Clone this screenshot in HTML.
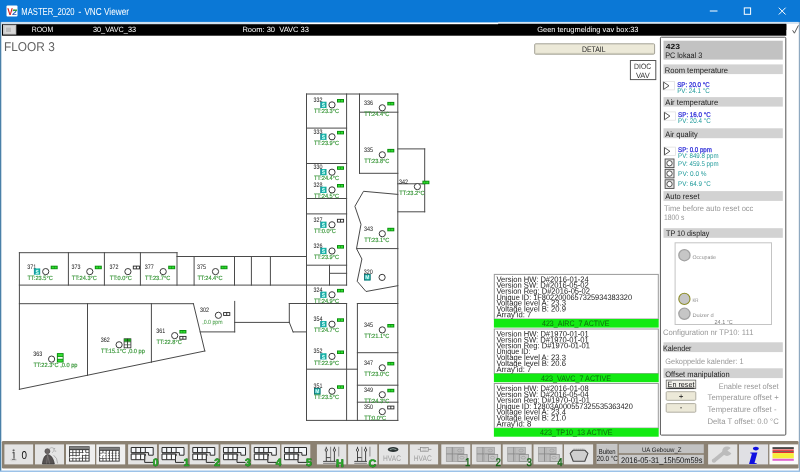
<!DOCTYPE html>
<html lang="nl">
<head>
<meta charset="utf-8">
<title>MASTER_2020 - VNC Viewer</title>
<style>
html,body{margin:0;padding:0;background:#fff;overflow:hidden}
svg{display:block;will-change:transform}
svg text{font-family:"Liberation Sans", sans-serif;white-space:pre;text-rendering:geometricPrecision}
</style>
</head>
<body>
<svg width="800" height="472" viewBox="0 0 800 472">
<rect x="0.00" y="0.00" width="800.00" height="472.00" fill="#fff"/>
<rect x="0.00" y="0.00" width="800.00" height="22.80" fill="#0b78d6"/>
<rect x="0.00" y="22.00" width="1.30" height="450.00" fill="#4a80a8"/>
<rect x="798.80" y="22.00" width="1.20" height="450.00" fill="#8fa9c0"/>
<rect x="0.00" y="470.50" width="800.00" height="1.50" fill="#9cc2e8"/>
<rect x="6.50" y="5.50" width="11.00" height="11.00" fill="#fff" rx="1"/>
<text x="7.2" y="14.6" font-size="10" fill="#d8201a" textLength="5.6" lengthAdjust="spacingAndGlyphs" font-weight="bold">V</text>
<text x="12.0" y="14.8" font-size="7.5" fill="#2a63c0" textLength="4.8" lengthAdjust="spacingAndGlyphs" font-weight="bold">2</text>
<rect x="13.00" y="9.50" width="4.00" height="1.50" fill="#38a038"/>
<text y="14.7" font-size="10.2" fill="#fff"><tspan x="21.3" textLength="53.2" lengthAdjust="spacingAndGlyphs">MASTER_2020</tspan><tspan x="75.6" textLength="8.6" lengthAdjust="spacingAndGlyphs"> - </tspan><tspan x="84.4" textLength="44.6" lengthAdjust="spacingAndGlyphs">VNC Viewer</tspan></text>
<line x1="709.80" y1="11.00" x2="717.50" y2="11.00" stroke="#fff" stroke-width="1"/>
<rect x="744.30" y="7.90" width="6.30" height="6.40" fill="none" stroke="#fff" stroke-width="1"/>
<line x1="778.80" y1="7.70" x2="785.60" y2="14.50" stroke="#fff" stroke-width="1"/>
<line x1="785.60" y1="7.70" x2="778.80" y2="14.50" stroke="#fff" stroke-width="1"/>
<rect x="301.00" y="22.50" width="197.10" height="1.90" fill="#fff"/>
<rect x="498.10" y="21.90" width="300.70" height="2.00" fill="#d4e4f2"/>
<rect x="1.20" y="21.90" width="299.80" height="2.30" fill="#cfe0ee"/>
<rect x="2.00" y="24.20" width="784.30" height="11.50" fill="#000"/>
<rect x="498.10" y="23.80" width="288.20" height="6.20" fill="#000"/>
<rect x="3.00" y="24.80" width="13.30" height="9.80" fill="#c4c4c4"/>
<rect x="4.50" y="26.00" width="10.50" height="7.50" fill="#d8d8d8"/>
<rect x="6.00" y="27.60" width="5.00" height="4.40" fill="#bdbdbd"/>
<text x="31.7" y="32.3" font-size="7.6" fill="#fff" textLength="21.5" lengthAdjust="spacingAndGlyphs">ROOM</text>
<text x="93.0" y="32.3" font-size="7.6" fill="#fff" textLength="43.0" lengthAdjust="spacingAndGlyphs">30_VAVC_33</text>
<text x="242.4" y="32.3" font-size="7.6" fill="#fff" textLength="66.6" lengthAdjust="spacingAndGlyphs">Room: 30  VAVC 33</text>
<text x="537.3" y="32.3" font-size="7.6" fill="#fff" textLength="101.2" lengthAdjust="spacingAndGlyphs">Geen terugmelding vav box:33</text>
<polyline points="792.60,30.30 794.40,33.20 798.40,25.40" fill="none" stroke="#555" stroke-width="1"/>
<text x="4.0" y="50.8" font-size="12.8" fill="#636363" textLength="50.8" lengthAdjust="spacingAndGlyphs">FLOOR 3</text>
<rect x="534.70" y="43.80" width="119.90" height="10.40" fill="#ece9d8" stroke="#a3a196" stroke-width="1" rx="1"/>
<line x1="535.50" y1="53.40" x2="654.00" y2="53.40" stroke="#c9c6b6" stroke-width="1"/>
<text x="582.0" y="52.1" font-size="8.0" fill="#222" textLength="23.6" lengthAdjust="spacingAndGlyphs">DETAIL</text>
<rect x="630.40" y="60.50" width="25.40" height="19.10" fill="#fff" stroke="#555" stroke-width="1"/>
<text x="634.1" y="68.9" font-size="7.8" fill="#333" textLength="17.1" lengthAdjust="spacingAndGlyphs">DIOC</text>
<text x="635.9" y="77.9" font-size="7.8" fill="#333" textLength="14.0" lengthAdjust="spacingAndGlyphs">VAV</text>
<g id="plan" fill="none" stroke-linecap="square">
<line x1="306.50" y1="94.00" x2="306.50" y2="420.40" stroke="#4a4a4a" stroke-width="1"/>
<line x1="346.60" y1="94.00" x2="346.60" y2="285.10" stroke="#4a4a4a" stroke-width="1"/>
<line x1="346.60" y1="303.50" x2="346.60" y2="420.40" stroke="#4a4a4a" stroke-width="1"/>
<line x1="359.50" y1="94.00" x2="359.50" y2="173.30" stroke="#4a4a4a" stroke-width="1"/>
<line x1="357.40" y1="303.50" x2="357.40" y2="420.40" stroke="#4a4a4a" stroke-width="1"/>
<line x1="397.80" y1="94.00" x2="397.80" y2="420.40" stroke="#4a4a4a" stroke-width="1"/>
<line x1="424.70" y1="148.90" x2="424.70" y2="211.80" stroke="#4a4a4a" stroke-width="1"/>
<line x1="306.50" y1="94.00" x2="397.80" y2="94.00" stroke="#4a4a4a" stroke-width="1"/>
<line x1="306.50" y1="128.10" x2="346.60" y2="128.10" stroke="#4a4a4a" stroke-width="1"/>
<line x1="359.50" y1="112.20" x2="397.80" y2="112.20" stroke="#4a4a4a" stroke-width="1"/>
<line x1="306.50" y1="163.50" x2="346.60" y2="163.50" stroke="#4a4a4a" stroke-width="1"/>
<line x1="359.50" y1="173.30" x2="397.80" y2="173.30" stroke="#4a4a4a" stroke-width="1"/>
<line x1="397.80" y1="148.90" x2="424.70" y2="148.90" stroke="#4a4a4a" stroke-width="1"/>
<line x1="397.80" y1="183.80" x2="424.70" y2="183.80" stroke="#4a4a4a" stroke-width="1"/>
<line x1="397.80" y1="211.80" x2="424.70" y2="211.80" stroke="#4a4a4a" stroke-width="1"/>
<line x1="306.50" y1="198.50" x2="346.60" y2="198.50" stroke="#4a4a4a" stroke-width="1"/>
<line x1="306.50" y1="213.90" x2="346.60" y2="213.90" stroke="#4a4a4a" stroke-width="1"/>
<line x1="306.50" y1="265.20" x2="346.60" y2="265.20" stroke="#4a4a4a" stroke-width="1"/>
<line x1="329.50" y1="265.20" x2="329.50" y2="285.10" stroke="#4a4a4a" stroke-width="1"/>
<line x1="329.50" y1="273.30" x2="346.60" y2="273.30" stroke="#4a4a4a" stroke-width="1"/>
<line x1="19.40" y1="285.10" x2="346.60" y2="285.10" stroke="#4a4a4a" stroke-width="1"/>
<line x1="289.30" y1="303.50" x2="346.60" y2="303.50" stroke="#4a4a4a" stroke-width="1"/>
<line x1="357.40" y1="303.50" x2="397.80" y2="303.50" stroke="#4a4a4a" stroke-width="1"/>
<line x1="306.50" y1="369.20" x2="357.40" y2="369.20" stroke="#4a4a4a" stroke-width="1"/>
<line x1="357.40" y1="352.70" x2="397.80" y2="352.70" stroke="#4a4a4a" stroke-width="1"/>
<line x1="357.40" y1="385.20" x2="397.80" y2="385.20" stroke="#4a4a4a" stroke-width="1"/>
<line x1="357.40" y1="402.20" x2="397.80" y2="402.20" stroke="#4a4a4a" stroke-width="1"/>
<line x1="306.50" y1="420.40" x2="397.80" y2="420.40" stroke="#4a4a4a" stroke-width="1"/>
<line x1="356.80" y1="248.60" x2="397.80" y2="248.60" stroke="#4a4a4a" stroke-width="1"/>
<line x1="19.40" y1="252.70" x2="19.40" y2="389.30" stroke="#4a4a4a" stroke-width="1"/>
<line x1="19.40" y1="252.70" x2="177.00" y2="252.70" stroke="#4a4a4a" stroke-width="1"/>
<line x1="177.00" y1="252.70" x2="177.00" y2="285.10" stroke="#4a4a4a" stroke-width="1"/>
<line x1="177.00" y1="256.50" x2="306.50" y2="256.50" stroke="#4a4a4a" stroke-width="1"/>
<line x1="68.40" y1="252.70" x2="68.40" y2="285.10" stroke="#4a4a4a" stroke-width="1"/>
<line x1="104.40" y1="252.70" x2="104.40" y2="285.10" stroke="#4a4a4a" stroke-width="1"/>
<line x1="140.40" y1="252.70" x2="140.40" y2="285.10" stroke="#4a4a4a" stroke-width="1"/>
<line x1="194.10" y1="256.50" x2="194.10" y2="285.10" stroke="#4a4a4a" stroke-width="1"/>
<line x1="234.50" y1="256.50" x2="234.50" y2="285.10" stroke="#4a4a4a" stroke-width="1"/>
<line x1="251.40" y1="256.50" x2="251.40" y2="285.10" stroke="#4a4a4a" stroke-width="1"/>
<line x1="270.40" y1="256.50" x2="270.40" y2="285.10" stroke="#4a4a4a" stroke-width="1"/>
<line x1="19.40" y1="303.70" x2="193.40" y2="303.70" stroke="#4a4a4a" stroke-width="1"/>
<line x1="87.50" y1="303.70" x2="87.50" y2="375.30" stroke="#4a4a4a" stroke-width="1"/>
<line x1="151.40" y1="303.70" x2="151.40" y2="362.30" stroke="#4a4a4a" stroke-width="1"/>
<line x1="19.40" y1="389.30" x2="204.80" y2="351.00" stroke="#4a4a4a" stroke-width="1"/>
<line x1="193.40" y1="303.70" x2="204.80" y2="351.00" stroke="#4a4a4a" stroke-width="1"/>
<line x1="200.20" y1="331.90" x2="234.70" y2="331.90" stroke="#4a4a4a" stroke-width="1"/>
<line x1="234.70" y1="301.40" x2="234.70" y2="331.90" stroke="#4a4a4a" stroke-width="1"/>
<line x1="234.70" y1="322.40" x2="289.30" y2="322.40" stroke="#4a4a4a" stroke-width="1"/>
<line x1="289.30" y1="303.50" x2="289.30" y2="322.40" stroke="#4a4a4a" stroke-width="1"/>
<line x1="289.30" y1="322.40" x2="293.10" y2="331.90" stroke="#4a4a4a" stroke-width="1"/>
<line x1="293.10" y1="331.90" x2="306.50" y2="331.90" stroke="#4a4a4a" stroke-width="1"/>
<polyline points="397.80,194.40 363.50,191.30 354.90,206.30 361.00,224.30 356.50,248.60 361.90,259.00 357.20,281.30 366.00,291.50 397.80,285.70" fill="none" stroke="#4a4a4a" stroke-width="1"/>
</g>
<defs><linearGradient id="teal" x1="0" y1="0" x2="1" y2="0"><stop offset="0" stop-color="#14909c"/><stop offset="0.55" stop-color="#22c8b4"/><stop offset="1" stop-color="#139a94"/></linearGradient></defs>
<text x="313.6" y="101.8" font-size="6.5" fill="#161616" textLength="9.0" lengthAdjust="spacingAndGlyphs">332</text>
<rect x="320.20" y="101.70" width="6.3" height="6.3" fill="url(#teal)"/>
<text x="321.7" y="107.0" font-size="5.6" fill="#e8ffff" textLength="3.3" lengthAdjust="spacingAndGlyphs" font-weight="bold">S</text>
<circle cx="332.00" cy="104.90" r="3.1" fill="#fff" stroke="#3a3a3a" stroke-width="1"/>
<rect x="337.00" y="99.00" width="7.00" height="3.50" fill="#0c8a10"/>
<rect x="338.00" y="99.90" width="2.20" height="1.80" fill="#2fe02f"/>
<rect x="340.80" y="99.90" width="2.20" height="1.80" fill="#2fe02f"/>
<text x="313.9" y="113.0" font-size="6.1" fill="#349434" textLength="25.2" lengthAdjust="spacingAndGlyphs" stroke="#349434" stroke-width="0.15">TT:23.3°C</text>
<text x="313.6" y="133.7" font-size="6.5" fill="#161616" textLength="9.0" lengthAdjust="spacingAndGlyphs">333</text>
<rect x="320.20" y="133.60" width="6.3" height="6.3" fill="url(#teal)"/>
<text x="321.7" y="138.9" font-size="5.6" fill="#e8ffff" textLength="3.3" lengthAdjust="spacingAndGlyphs" font-weight="bold">S</text>
<circle cx="332.00" cy="136.80" r="3.1" fill="#fff" stroke="#3a3a3a" stroke-width="1"/>
<rect x="337.00" y="130.90" width="7.00" height="3.50" fill="#0c8a10"/>
<rect x="338.00" y="131.80" width="2.20" height="1.80" fill="#2fe02f"/>
<rect x="340.80" y="131.80" width="2.20" height="1.80" fill="#2fe02f"/>
<text x="313.9" y="144.9" font-size="6.1" fill="#349434" textLength="25.2" lengthAdjust="spacingAndGlyphs" stroke="#349434" stroke-width="0.15">TT:23.9°C</text>
<text x="313.6" y="169.1" font-size="6.5" fill="#161616" textLength="9.0" lengthAdjust="spacingAndGlyphs">330</text>
<rect x="320.20" y="169.00" width="6.3" height="6.3" fill="url(#teal)"/>
<text x="321.7" y="174.3" font-size="5.6" fill="#e8ffff" textLength="3.3" lengthAdjust="spacingAndGlyphs" font-weight="bold">S</text>
<circle cx="332.00" cy="172.20" r="3.1" fill="#fff" stroke="#3a3a3a" stroke-width="1"/>
<rect x="337.00" y="166.30" width="7.00" height="3.50" fill="#0c8a10"/>
<rect x="338.00" y="167.20" width="2.20" height="1.80" fill="#2fe02f"/>
<rect x="340.80" y="167.20" width="2.20" height="1.80" fill="#2fe02f"/>
<text x="313.9" y="180.3" font-size="6.1" fill="#349434" textLength="25.2" lengthAdjust="spacingAndGlyphs" stroke="#349434" stroke-width="0.15">TT:24.4°C</text>
<text x="313.6" y="186.8" font-size="6.5" fill="#161616" textLength="9.0" lengthAdjust="spacingAndGlyphs">328</text>
<rect x="320.20" y="186.70" width="6.3" height="6.3" fill="url(#teal)"/>
<text x="321.7" y="192.0" font-size="5.6" fill="#e8ffff" textLength="3.3" lengthAdjust="spacingAndGlyphs" font-weight="bold">S</text>
<circle cx="332.00" cy="189.90" r="3.1" fill="#fff" stroke="#3a3a3a" stroke-width="1"/>
<rect x="337.00" y="184.00" width="7.00" height="3.50" fill="#0c8a10"/>
<rect x="338.00" y="184.90" width="2.20" height="1.80" fill="#2fe02f"/>
<rect x="340.80" y="184.90" width="2.20" height="1.80" fill="#2fe02f"/>
<text x="313.9" y="198.0" font-size="6.1" fill="#349434" textLength="25.2" lengthAdjust="spacingAndGlyphs" stroke="#349434" stroke-width="0.15">TT:24.5°C</text>
<text x="313.6" y="221.7" font-size="6.5" fill="#161616" textLength="9.0" lengthAdjust="spacingAndGlyphs">327</text>
<rect x="320.20" y="221.60" width="6.3" height="6.3" fill="url(#teal)"/>
<text x="321.7" y="226.9" font-size="5.6" fill="#e8ffff" textLength="3.3" lengthAdjust="spacingAndGlyphs" font-weight="bold">S</text>
<circle cx="332.00" cy="224.80" r="3.1" fill="#fff" stroke="#3a3a3a" stroke-width="1"/>
<rect x="337.40" y="219.30" width="6.20" height="2.80" fill="#fff" stroke="#262626" stroke-width="0.9"/>
<line x1="340.50" y1="219.30" x2="340.50" y2="222.10" stroke="#262626" stroke-width="0.9"/>
<text x="313.9" y="232.9" font-size="6.1" fill="#349434" textLength="22.0" lengthAdjust="spacingAndGlyphs" stroke="#349434" stroke-width="0.15">TT:0.0°C</text>
<text x="313.6" y="247.9" font-size="6.5" fill="#161616" textLength="9.0" lengthAdjust="spacingAndGlyphs">326</text>
<rect x="320.20" y="247.80" width="6.3" height="6.3" fill="url(#teal)"/>
<text x="321.7" y="253.1" font-size="5.6" fill="#e8ffff" textLength="3.3" lengthAdjust="spacingAndGlyphs" font-weight="bold">S</text>
<circle cx="332.00" cy="251.00" r="3.1" fill="#fff" stroke="#3a3a3a" stroke-width="1"/>
<rect x="337.00" y="245.10" width="7.00" height="3.50" fill="#0c8a10"/>
<rect x="338.00" y="246.00" width="2.20" height="1.80" fill="#2fe02f"/>
<rect x="340.80" y="246.00" width="2.20" height="1.80" fill="#2fe02f"/>
<text x="313.9" y="259.1" font-size="6.1" fill="#349434" textLength="25.2" lengthAdjust="spacingAndGlyphs" stroke="#349434" stroke-width="0.15">TT:23.9°C</text>
<text x="313.6" y="291.7" font-size="6.5" fill="#161616" textLength="9.0" lengthAdjust="spacingAndGlyphs">324</text>
<rect x="320.20" y="291.60" width="6.3" height="6.3" fill="url(#teal)"/>
<text x="321.7" y="296.9" font-size="5.6" fill="#e8ffff" textLength="3.3" lengthAdjust="spacingAndGlyphs" font-weight="bold">S</text>
<circle cx="332.00" cy="294.80" r="3.1" fill="#fff" stroke="#3a3a3a" stroke-width="1"/>
<rect x="337.00" y="288.90" width="7.00" height="3.50" fill="#0c8a10"/>
<rect x="338.00" y="289.80" width="2.20" height="1.80" fill="#2fe02f"/>
<rect x="340.80" y="289.80" width="2.20" height="1.80" fill="#2fe02f"/>
<text x="313.9" y="302.9" font-size="6.1" fill="#349434" textLength="25.2" lengthAdjust="spacingAndGlyphs" stroke="#349434" stroke-width="0.15">TT:24.9°C</text>
<text x="313.6" y="321.1" font-size="6.5" fill="#161616" textLength="9.0" lengthAdjust="spacingAndGlyphs">354</text>
<rect x="320.20" y="321.00" width="6.3" height="6.3" fill="url(#teal)"/>
<text x="321.7" y="326.3" font-size="5.6" fill="#e8ffff" textLength="3.3" lengthAdjust="spacingAndGlyphs" font-weight="bold">S</text>
<circle cx="332.00" cy="324.20" r="3.1" fill="#fff" stroke="#3a3a3a" stroke-width="1"/>
<rect x="337.00" y="318.30" width="7.00" height="3.50" fill="#0c8a10"/>
<rect x="338.00" y="319.20" width="2.20" height="1.80" fill="#2fe02f"/>
<rect x="340.80" y="319.20" width="2.20" height="1.80" fill="#2fe02f"/>
<text x="313.9" y="332.3" font-size="6.1" fill="#349434" textLength="25.2" lengthAdjust="spacingAndGlyphs" stroke="#349434" stroke-width="0.15">TT:24.7°C</text>
<text x="313.6" y="353.3" font-size="6.5" fill="#161616" textLength="9.0" lengthAdjust="spacingAndGlyphs">352</text>
<rect x="320.20" y="353.20" width="6.3" height="6.3" fill="url(#teal)"/>
<text x="321.7" y="358.5" font-size="5.6" fill="#e8ffff" textLength="3.3" lengthAdjust="spacingAndGlyphs" font-weight="bold">S</text>
<circle cx="332.00" cy="356.40" r="3.1" fill="#fff" stroke="#3a3a3a" stroke-width="1"/>
<rect x="337.00" y="350.50" width="7.00" height="3.50" fill="#0c8a10"/>
<rect x="338.00" y="351.40" width="2.20" height="1.80" fill="#2fe02f"/>
<rect x="340.80" y="351.40" width="2.20" height="1.80" fill="#2fe02f"/>
<text x="313.9" y="364.5" font-size="6.1" fill="#349434" textLength="25.2" lengthAdjust="spacingAndGlyphs" stroke="#349434" stroke-width="0.15">TT:22.9°C</text>
<text x="313.6" y="388.1" font-size="6.5" fill="#161616" textLength="9.0" lengthAdjust="spacingAndGlyphs">351</text>
<rect x="314.10" y="388.10" width="6.3" height="6.3" fill="url(#teal)"/>
<rect x="314.45" y="388.45" width="5.6" height="5.6" fill="none" stroke="#0d6a6a" stroke-width="0.7"/>
<text x="315.2" y="393.4" font-size="5.6" fill="#e8ffff" textLength="4.2" lengthAdjust="spacingAndGlyphs" font-weight="bold">M</text>
<circle cx="332.00" cy="391.20" r="3.1" fill="#fff" stroke="#3a3a3a" stroke-width="1"/>
<rect x="337.00" y="385.30" width="7.00" height="3.50" fill="#0c8a10"/>
<rect x="338.00" y="386.20" width="2.20" height="1.80" fill="#2fe02f"/>
<rect x="340.80" y="386.20" width="2.20" height="1.80" fill="#2fe02f"/>
<text x="313.9" y="399.3" font-size="6.1" fill="#349434" textLength="25.2" lengthAdjust="spacingAndGlyphs" stroke="#349434" stroke-width="0.15">TT:23.5°C</text>
<text x="363.9" y="104.7" font-size="6.5" fill="#161616" textLength="9.0" lengthAdjust="spacingAndGlyphs">336</text>
<circle cx="382.30" cy="107.80" r="3.1" fill="#fff" stroke="#3a3a3a" stroke-width="1"/>
<rect x="387.30" y="101.90" width="7.00" height="3.50" fill="#0c8a10"/>
<rect x="388.30" y="102.80" width="2.20" height="1.80" fill="#2fe02f"/>
<rect x="391.10" y="102.80" width="2.20" height="1.80" fill="#2fe02f"/>
<text x="364.2" y="115.9" font-size="6.1" fill="#349434" textLength="25.2" lengthAdjust="spacingAndGlyphs" stroke="#349434" stroke-width="0.15">TT:24.4°C</text>
<text x="363.9" y="151.7" font-size="6.5" fill="#161616" textLength="9.0" lengthAdjust="spacingAndGlyphs">335</text>
<circle cx="382.30" cy="154.80" r="3.1" fill="#fff" stroke="#3a3a3a" stroke-width="1"/>
<rect x="387.30" y="148.90" width="7.00" height="3.50" fill="#0c8a10"/>
<rect x="388.30" y="149.80" width="2.20" height="1.80" fill="#2fe02f"/>
<rect x="391.10" y="149.80" width="2.20" height="1.80" fill="#2fe02f"/>
<text x="364.2" y="162.9" font-size="6.1" fill="#349434" textLength="25.2" lengthAdjust="spacingAndGlyphs" stroke="#349434" stroke-width="0.15">TT:23.8°C</text>
<text x="363.9" y="230.6" font-size="6.5" fill="#161616" textLength="9.0" lengthAdjust="spacingAndGlyphs">343</text>
<circle cx="382.30" cy="233.70" r="3.1" fill="#fff" stroke="#3a3a3a" stroke-width="1"/>
<rect x="387.30" y="227.80" width="7.00" height="3.50" fill="#0c8a10"/>
<rect x="388.30" y="228.70" width="2.20" height="1.80" fill="#2fe02f"/>
<rect x="391.10" y="228.70" width="2.20" height="1.80" fill="#2fe02f"/>
<text x="364.2" y="241.8" font-size="6.1" fill="#349434" textLength="25.2" lengthAdjust="spacingAndGlyphs" stroke="#349434" stroke-width="0.15">TT:23.1°C</text>
<text x="363.7" y="274.3" font-size="6.5" fill="#161616" textLength="9.0" lengthAdjust="spacingAndGlyphs">320</text>
<rect x="364.20" y="274.10" width="6.3" height="6.3" fill="url(#teal)"/>
<rect x="364.55" y="274.45" width="5.6" height="5.6" fill="none" stroke="#0d6a6a" stroke-width="0.7"/>
<text x="365.3" y="279.4" font-size="5.6" fill="#e8ffff" textLength="4.2" lengthAdjust="spacingAndGlyphs" font-weight="bold">M</text>
<circle cx="382.10" cy="277.40" r="3.1" fill="#fff" stroke="#3a3a3a" stroke-width="1"/>
<text x="363.9" y="326.8" font-size="6.5" fill="#161616" textLength="9.0" lengthAdjust="spacingAndGlyphs">345</text>
<circle cx="382.30" cy="329.90" r="3.1" fill="#fff" stroke="#3a3a3a" stroke-width="1"/>
<rect x="387.30" y="324.00" width="7.00" height="3.50" fill="#0c8a10"/>
<rect x="388.30" y="324.90" width="2.20" height="1.80" fill="#2fe02f"/>
<rect x="391.10" y="324.90" width="2.20" height="1.80" fill="#2fe02f"/>
<text x="364.2" y="338.0" font-size="6.1" fill="#349434" textLength="25.2" lengthAdjust="spacingAndGlyphs" stroke="#349434" stroke-width="0.15">TT:21.1°C</text>
<text x="363.9" y="364.7" font-size="6.5" fill="#161616" textLength="9.0" lengthAdjust="spacingAndGlyphs">347</text>
<circle cx="382.30" cy="367.80" r="3.1" fill="#fff" stroke="#3a3a3a" stroke-width="1"/>
<rect x="387.30" y="361.90" width="7.00" height="3.50" fill="#0c8a10"/>
<rect x="388.30" y="362.80" width="2.20" height="1.80" fill="#2fe02f"/>
<rect x="391.10" y="362.80" width="2.20" height="1.80" fill="#2fe02f"/>
<text x="364.2" y="375.9" font-size="6.1" fill="#349434" textLength="25.2" lengthAdjust="spacingAndGlyphs" stroke="#349434" stroke-width="0.15">TT:23.0°C</text>
<text x="363.9" y="391.6" font-size="6.5" fill="#161616" textLength="9.0" lengthAdjust="spacingAndGlyphs">349</text>
<circle cx="382.30" cy="394.70" r="3.1" fill="#fff" stroke="#3a3a3a" stroke-width="1"/>
<rect x="387.30" y="388.80" width="7.00" height="3.50" fill="#0c8a10"/>
<rect x="388.30" y="389.70" width="2.20" height="1.80" fill="#2fe02f"/>
<rect x="391.10" y="389.70" width="2.20" height="1.80" fill="#2fe02f"/>
<text x="364.2" y="402.8" font-size="6.1" fill="#349434" textLength="25.2" lengthAdjust="spacingAndGlyphs" stroke="#349434" stroke-width="0.15">TT:24.3°C</text>
<text x="363.9" y="408.5" font-size="6.5" fill="#161616" textLength="9.0" lengthAdjust="spacingAndGlyphs">350</text>
<circle cx="382.30" cy="411.60" r="3.1" fill="#fff" stroke="#3a3a3a" stroke-width="1"/>
<rect x="387.70" y="406.10" width="6.20" height="2.80" fill="#fff" stroke="#262626" stroke-width="0.9"/>
<line x1="390.80" y1="406.10" x2="390.80" y2="408.90" stroke="#262626" stroke-width="0.9"/>
<text x="364.2" y="419.7" font-size="6.1" fill="#349434" textLength="22.0" lengthAdjust="spacingAndGlyphs" stroke="#349434" stroke-width="0.15">TT:0.0°C</text>
<text x="399.0" y="183.5" font-size="6.5" fill="#161616" textLength="9.0" lengthAdjust="spacingAndGlyphs">342</text>
<circle cx="417.40" cy="186.60" r="3.1" fill="#fff" stroke="#3a3a3a" stroke-width="1"/>
<rect x="422.40" y="180.70" width="7.00" height="3.50" fill="#0c8a10"/>
<rect x="423.40" y="181.60" width="2.20" height="1.80" fill="#2fe02f"/>
<rect x="426.20" y="181.60" width="2.20" height="1.80" fill="#2fe02f"/>
<text x="399.3" y="194.7" font-size="6.1" fill="#349434" textLength="25.2" lengthAdjust="spacingAndGlyphs" stroke="#349434" stroke-width="0.15">TT:23.2°C</text>
<text x="27.3" y="268.5" font-size="6.5" fill="#161616" textLength="9.0" lengthAdjust="spacingAndGlyphs">371</text>
<rect x="33.90" y="268.40" width="6.3" height="6.3" fill="url(#teal)"/>
<text x="35.4" y="273.7" font-size="5.6" fill="#e8ffff" textLength="3.3" lengthAdjust="spacingAndGlyphs" font-weight="bold">S</text>
<circle cx="45.70" cy="271.60" r="3.1" fill="#fff" stroke="#3a3a3a" stroke-width="1"/>
<rect x="50.70" y="265.70" width="7.00" height="3.50" fill="#0c8a10"/>
<rect x="51.70" y="266.60" width="2.20" height="1.80" fill="#2fe02f"/>
<rect x="54.50" y="266.60" width="2.20" height="1.80" fill="#2fe02f"/>
<text x="27.6" y="279.7" font-size="6.1" fill="#349434" textLength="25.2" lengthAdjust="spacingAndGlyphs" stroke="#349434" stroke-width="0.15">TT:23.5°C</text>
<text x="71.4" y="268.5" font-size="6.5" fill="#161616" textLength="9.0" lengthAdjust="spacingAndGlyphs">373</text>
<circle cx="89.80" cy="271.60" r="3.1" fill="#fff" stroke="#3a3a3a" stroke-width="1"/>
<rect x="94.80" y="265.70" width="7.00" height="3.50" fill="#0c8a10"/>
<rect x="95.80" y="266.60" width="2.20" height="1.80" fill="#2fe02f"/>
<rect x="98.60" y="266.60" width="2.20" height="1.80" fill="#2fe02f"/>
<text x="71.7" y="279.7" font-size="6.1" fill="#349434" textLength="25.2" lengthAdjust="spacingAndGlyphs" stroke="#349434" stroke-width="0.15">TT:24.3°C</text>
<text x="109.5" y="268.5" font-size="6.5" fill="#161616" textLength="9.0" lengthAdjust="spacingAndGlyphs">372</text>
<circle cx="127.90" cy="271.60" r="3.1" fill="#fff" stroke="#3a3a3a" stroke-width="1"/>
<rect x="133.30" y="266.10" width="6.20" height="2.80" fill="#fff" stroke="#262626" stroke-width="0.9"/>
<line x1="136.40" y1="266.10" x2="136.40" y2="268.90" stroke="#262626" stroke-width="0.9"/>
<text x="109.8" y="279.7" font-size="6.1" fill="#349434" textLength="22.0" lengthAdjust="spacingAndGlyphs" stroke="#349434" stroke-width="0.15">TT:0.0°C</text>
<text x="144.8" y="268.5" font-size="6.5" fill="#161616" textLength="9.0" lengthAdjust="spacingAndGlyphs">377</text>
<circle cx="163.20" cy="271.60" r="3.1" fill="#fff" stroke="#3a3a3a" stroke-width="1"/>
<rect x="168.20" y="265.70" width="7.00" height="3.50" fill="#0c8a10"/>
<rect x="169.20" y="266.60" width="2.20" height="1.80" fill="#2fe02f"/>
<rect x="172.00" y="266.60" width="2.20" height="1.80" fill="#2fe02f"/>
<text x="145.1" y="279.7" font-size="6.1" fill="#349434" textLength="25.2" lengthAdjust="spacingAndGlyphs" stroke="#349434" stroke-width="0.15">TT:23.7°C</text>
<text x="197.1" y="268.5" font-size="6.5" fill="#161616" textLength="9.0" lengthAdjust="spacingAndGlyphs">375</text>
<circle cx="215.50" cy="271.60" r="3.1" fill="#fff" stroke="#3a3a3a" stroke-width="1"/>
<rect x="220.50" y="265.70" width="7.00" height="3.50" fill="#0c8a10"/>
<rect x="221.50" y="266.60" width="2.20" height="1.80" fill="#2fe02f"/>
<rect x="224.30" y="266.60" width="2.20" height="1.80" fill="#2fe02f"/>
<text x="197.4" y="279.7" font-size="6.1" fill="#349434" textLength="25.2" lengthAdjust="spacingAndGlyphs" stroke="#349434" stroke-width="0.15">TT:24.4°C</text>
<text x="33.2" y="356.0" font-size="6.5" fill="#161616" textLength="9.0" lengthAdjust="spacingAndGlyphs">363</text>
<circle cx="51.60" cy="359.10" r="3.1" fill="#fff" stroke="#3a3a3a" stroke-width="1"/>
<text x="33.5" y="367.2" font-size="6.1" fill="#349434" textLength="44.0" lengthAdjust="spacingAndGlyphs" stroke="#349434" stroke-width="0.15">TT:22.3°C ,0.0 pp</text>
<rect x="56.90" y="353.10" width="6.70" height="9.40" fill="#0c8a10"/>
<rect x="57.80" y="353.90" width="4.90" height="2.10" fill="#2fe02f"/>
<rect x="57.80" y="356.90" width="4.90" height="1.90" fill="#f4fff0"/>
<rect x="57.80" y="359.60" width="4.90" height="2.10" fill="#2fe02f"/>
<text x="100.7" y="341.7" font-size="6.5" fill="#161616" textLength="9.0" lengthAdjust="spacingAndGlyphs">362</text>
<circle cx="119.10" cy="344.80" r="3.1" fill="#fff" stroke="#3a3a3a" stroke-width="1"/>
<text x="101.0" y="352.9" font-size="6.1" fill="#349434" textLength="43.8" lengthAdjust="spacingAndGlyphs" stroke="#349434" stroke-width="0.15">TT:15.1°C ,0.0 pp</text>
<rect x="124.10" y="338.80" width="6.80" height="9.00" fill="#fff" stroke="#2a2a2a" stroke-width="0.8"/>
<rect x="124.10" y="338.80" width="6.80" height="2.80" fill="#18a018"/>
<line x1="127.50" y1="338.80" x2="127.50" y2="347.80" stroke="#1c3a1c" stroke-width="0.8"/>
<line x1="124.10" y1="341.80" x2="130.90" y2="341.80" stroke="#2a5a2a" stroke-width="0.7"/>
<line x1="124.10" y1="344.80" x2="130.90" y2="344.80" stroke="#444" stroke-width="0.7"/>
<text x="156.3" y="332.5" font-size="6.5" fill="#161616" textLength="9.0" lengthAdjust="spacingAndGlyphs">361</text>
<circle cx="174.70" cy="335.60" r="3.1" fill="#fff" stroke="#3a3a3a" stroke-width="1"/>
<rect x="179.40" y="330.00" width="7.00" height="3.50" fill="#0c8a10"/>
<rect x="180.40" y="330.90" width="2.20" height="1.80" fill="#2fe02f"/>
<rect x="183.20" y="330.90" width="2.20" height="1.80" fill="#2fe02f"/>
<text x="156.6" y="343.7" font-size="6.1" fill="#349434" textLength="25.2" lengthAdjust="spacingAndGlyphs" stroke="#349434" stroke-width="0.15">TT:22.8°C</text>
<rect x="179.80" y="336.40" width="6.20" height="2.80" fill="#fff" stroke="#262626" stroke-width="0.9"/>
<line x1="182.90" y1="336.40" x2="182.90" y2="339.20" stroke="#262626" stroke-width="0.9"/>
<text x="200.0" y="312.2" font-size="6.5" fill="#161616" textLength="9.0" lengthAdjust="spacingAndGlyphs">302</text>
<circle cx="218.40" cy="315.30" r="3.1" fill="#fff" stroke="#3a3a3a" stroke-width="1"/>
<rect x="223.60" y="312.60" width="6.20" height="2.80" fill="#fff" stroke="#262626" stroke-width="0.9"/>
<line x1="226.70" y1="312.60" x2="226.70" y2="315.40" stroke="#262626" stroke-width="0.9"/>
<text x="202.3" y="323.7" font-size="6.1" fill="#349434" textLength="20.3" lengthAdjust="spacingAndGlyphs">,0.0 ppm</text>
<rect x="660.40" y="37.20" width="125.40" height="397.90" fill="#fff" stroke="#555" stroke-width="1" rx="1"/>
<rect x="663.50" y="40.70" width="119.30" height="18.90" fill="#c2c2c2"/>
<text x="665.7" y="49.3" font-size="7.4" fill="#111" textLength="14.2" lengthAdjust="spacingAndGlyphs" font-weight="bold">423</text>
<text x="665.2" y="58.0" font-size="8" fill="#1a1a1a" textLength="37.0" lengthAdjust="spacingAndGlyphs">PC lokaal 3</text>
<rect x="663.50" y="64.40" width="119.30" height="9.70" fill="#d2d2d2"/>
<text x="664.8" y="72.5" font-size="8" fill="#1a1a1a" textLength="63.2" lengthAdjust="spacingAndGlyphs">Room temperature</text>
<rect x="663.00" y="81.60" width="11.60" height="8.30" fill="#fff" stroke="#dcdcdc" stroke-width="0.7"/>
<polygon points="663.60,82.10 663.60,89.40 669.00,85.75" fill="#fff" stroke="#444" stroke-width="0.9"/>
<text x="677.2" y="87.2" font-size="6.9" fill="#2a2ad8" textLength="32.6" lengthAdjust="spacingAndGlyphs" stroke="#2a2ad8" stroke-width="0.25">SP: 20.0 °C</text>
<text x="677.2" y="92.9" font-size="6.9" fill="#1f9a9a" textLength="32.6" lengthAdjust="spacingAndGlyphs">PV: 24.1 °C</text>
<rect x="663.50" y="97.10" width="119.30" height="9.50" fill="#d2d2d2"/>
<text x="665.3" y="105.0" font-size="8" fill="#1a1a1a" textLength="52.9" lengthAdjust="spacingAndGlyphs">Air temperature</text>
<rect x="663.90" y="111.90" width="11.60" height="8.30" fill="#fff" stroke="#dcdcdc" stroke-width="0.7"/>
<polygon points="664.50,112.40 664.50,119.70 669.90,116.05" fill="#fff" stroke="#444" stroke-width="0.9"/>
<text x="678.1" y="116.8" font-size="6.9" fill="#2a2ad8" textLength="32.6" lengthAdjust="spacingAndGlyphs" stroke="#2a2ad8" stroke-width="0.25">SP: 16.0 °C</text>
<text x="678.1" y="123.0" font-size="6.9" fill="#1f9a9a" textLength="32.6" lengthAdjust="spacingAndGlyphs">PV: 20.4 °C</text>
<rect x="663.50" y="128.30" width="119.30" height="9.90" fill="#d2d2d2"/>
<text x="665.3" y="136.6" font-size="8" fill="#1a1a1a" textLength="32.4" lengthAdjust="spacingAndGlyphs">Air quality</text>
<rect x="663.90" y="147.10" width="11.60" height="8.30" fill="#fff" stroke="#dcdcdc" stroke-width="0.7"/>
<polygon points="664.50,147.60 664.50,154.90 669.90,151.25" fill="#fff" stroke="#444" stroke-width="0.9"/>
<text x="678.1" y="152.1" font-size="6.9" fill="#2a2ad8" textLength="33.8" lengthAdjust="spacingAndGlyphs" stroke="#2a2ad8" stroke-width="0.25">SP: 0.0 ppm</text>
<text x="678.1" y="157.8" font-size="6.9" fill="#1f9a9a" textLength="40.4" lengthAdjust="spacingAndGlyphs">PV: 849.8 ppm</text>
<rect x="665.10" y="159.00" width="8.90" height="8.60" fill="#e4e4e4" stroke="#4a4a4a" stroke-width="0.9"/>
<circle cx="669.50" cy="163.25" r="2.7" fill="#fff" stroke="#444" stroke-width="0.9"/>
<text x="678.1" y="165.8" font-size="6.9" fill="#1f9a9a" textLength="40.4" lengthAdjust="spacingAndGlyphs">PV: 459.5 ppm</text>
<rect x="665.10" y="169.30" width="8.90" height="8.60" fill="#e4e4e4" stroke="#4a4a4a" stroke-width="0.9"/>
<circle cx="669.50" cy="173.55" r="2.7" fill="#fff" stroke="#444" stroke-width="0.9"/>
<text x="678.1" y="176.0" font-size="6.9" fill="#1f9a9a" textLength="28.5" lengthAdjust="spacingAndGlyphs">PV: 0.0 %</text>
<rect x="665.10" y="179.80" width="8.90" height="8.60" fill="#e4e4e4" stroke="#4a4a4a" stroke-width="0.9"/>
<circle cx="669.50" cy="184.05" r="2.7" fill="#fff" stroke="#444" stroke-width="0.9"/>
<text x="678.1" y="186.4" font-size="6.9" fill="#1f9a9a" textLength="32.6" lengthAdjust="spacingAndGlyphs">PV: 64.9 °C</text>
<rect x="663.50" y="191.10" width="119.30" height="9.80" fill="#d2d2d2"/>
<text x="665.3" y="199.3" font-size="8" fill="#1a1a1a" textLength="34.2" lengthAdjust="spacingAndGlyphs">Auto reset</text>
<text x="663.9" y="211.1" font-size="8" fill="#979797" textLength="89.5" lengthAdjust="spacingAndGlyphs">Time before auto reset occ</text>
<text x="663.9" y="220.1" font-size="8" fill="#979797" textLength="20.5" lengthAdjust="spacingAndGlyphs">1800 s</text>
<rect x="663.50" y="228.20" width="119.30" height="9.60" fill="#d2d2d2"/>
<text x="666.0" y="236.2" font-size="8" fill="#1a1a1a" textLength="43.3" lengthAdjust="spacingAndGlyphs">TP 10 display</text>
<rect x="675.10" y="242.80" width="96.40" height="81.70" fill="#fff" stroke="#c4c4c4" stroke-width="1"/>
<circle cx="684.40" cy="255.20" r="5.6" fill="#c6c6c6" stroke="#a2a2a2" stroke-width="1.3"/>
<text x="692.4" y="258.8" font-size="5.2" fill="#8c8c8c" textLength="23.6" lengthAdjust="spacingAndGlyphs">Occupatie</text>
<circle cx="684.40" cy="298.90" r="5.6" fill="#c6c6c6" stroke="#8c8c28" stroke-width="1.1"/>
<text x="692.4" y="302.4" font-size="5.2" fill="#8c8c8c" textLength="6.2" lengthAdjust="spacingAndGlyphs">KR</text>
<circle cx="684.40" cy="313.80" r="5.6" fill="#c6c6c6" stroke="#a2a2a2" stroke-width="1.3"/>
<text x="692.4" y="316.8" font-size="5.2" fill="#8c8c8c" textLength="21.3" lengthAdjust="spacingAndGlyphs">Duizer d</text>
<text x="714.6" y="323.8" font-size="5.8" fill="#7a7a7a" textLength="18.2" lengthAdjust="spacingAndGlyphs">24.1 °C</text>
<text x="663.0" y="335.2" font-size="8" fill="#979797" textLength="90.4" lengthAdjust="spacingAndGlyphs">Configuration nr TP10: 111</text>
<rect x="663.50" y="342.30" width="119.30" height="9.80" fill="#d2d2d2"/>
<text x="663.0" y="350.5" font-size="8" fill="#1a1a1a" textLength="28.5" lengthAdjust="spacingAndGlyphs">Kalender</text>
<text x="665.3" y="363.6" font-size="8" fill="#979797" textLength="78.3" lengthAdjust="spacingAndGlyphs">Gekoppelde kalender: 1</text>
<rect x="663.50" y="368.30" width="119.30" height="9.80" fill="#d2d2d2"/>
<text x="665.3" y="376.5" font-size="8" fill="#1a1a1a" textLength="64.4" lengthAdjust="spacingAndGlyphs">Offset manipulation</text>
<rect x="666.20" y="380.10" width="29.60" height="8.60" fill="#f2f1ea" stroke="#555" stroke-width="0.7"/>
<text x="667.6" y="387.0" font-size="7.6" fill="#222" textLength="26.8" lengthAdjust="spacingAndGlyphs" text-decoration="underline">En reset</text>
<line x1="667.60" y1="387.90" x2="694.40" y2="387.90" stroke="#333" stroke-width="0.7"/>
<rect x="666.20" y="391.70" width="29.60" height="8.60" fill="#ece9d8" stroke="#a9a79b" stroke-width="0.9" rx="1"/>
<text x="681.0" y="399.0" font-size="8" fill="#111" text-anchor="middle">+</text>
<rect x="666.20" y="403.60" width="29.60" height="8.60" fill="#ece9d8" stroke="#a9a79b" stroke-width="0.9" rx="1"/>
<text x="681.0" y="410.3" font-size="8" fill="#111" text-anchor="middle">-</text>
<text x="778.7" y="388.5" font-size="8" fill="#979797" textLength="60.0" lengthAdjust="spacingAndGlyphs" text-anchor="end">Enable reset ofset</text>
<text x="778.7" y="400.1" font-size="8" fill="#979797" textLength="71.2" lengthAdjust="spacingAndGlyphs" text-anchor="end">Temperature offset +</text>
<text x="776.5" y="412.1" font-size="8" fill="#979797" textLength="69.0" lengthAdjust="spacingAndGlyphs" text-anchor="end">Temperature offset -</text>
<text x="778.7" y="424.0" font-size="8" fill="#979797" textLength="71.2" lengthAdjust="spacingAndGlyphs" text-anchor="end">Delta T offset: 0.0 °C</text>
<rect x="494.30" y="274.40" width="164.00" height="44.60" fill="#fff" stroke="#9a9a9a" stroke-width="1"/>
<text x="496.4" y="281.9" font-size="8.0" fill="#222" textLength="92.4" lengthAdjust="spacingAndGlyphs" transform="rotate(0.03 496.4 281.9)">Version HW: D#2016-01-24</text>
<text x="496.4" y="287.8" font-size="8.0" fill="#222" textLength="92.4" lengthAdjust="spacingAndGlyphs" transform="rotate(0.03 496.4 287.8)">Version SW: D#2016-05-02</text>
<text x="496.4" y="293.7" font-size="8.0" fill="#222" textLength="93.6" lengthAdjust="spacingAndGlyphs" transform="rotate(0.03 496.4 293.7)">Version Reg: D#2016-05-02</text>
<text x="496.4" y="299.6" font-size="8.0" fill="#222" textLength="135.6" lengthAdjust="spacingAndGlyphs" transform="rotate(0.03 496.4 299.6)">Unique ID: 1F8022000657325934383320</text>
<text x="496.4" y="305.5" font-size="8.0" fill="#222" textLength="69.5" lengthAdjust="spacingAndGlyphs" transform="rotate(0.03 496.4 305.5)">Voltage level A: 23.3</text>
<text x="496.4" y="311.4" font-size="8.0" fill="#222" textLength="69.5" lengthAdjust="spacingAndGlyphs" transform="rotate(0.03 496.4 311.4)">Voltage level B: 20.9</text>
<text x="496.4" y="317.3" font-size="8.0" fill="#222" textLength="35.0" lengthAdjust="spacingAndGlyphs" transform="rotate(0.03 496.4 317.3)">Array id: 7</text>
<rect x="493.90" y="319.00" width="164.80" height="8.60" fill="#12ea12"/>
<text x="542.0" y="326.3" font-size="7.9" fill="#0f6a0f" textLength="67.4" lengthAdjust="spacingAndGlyphs">423_AIRC_7 ACTIVE</text>
<rect x="494.30" y="329.00" width="164.00" height="44.60" fill="#fff" stroke="#9a9a9a" stroke-width="1"/>
<text x="496.4" y="336.5" font-size="8.0" fill="#222" textLength="92.4" lengthAdjust="spacingAndGlyphs" transform="rotate(0.03 496.4 336.5)">Version HW: D#1970-01-01</text>
<text x="496.4" y="342.4" font-size="8.0" fill="#222" textLength="92.4" lengthAdjust="spacingAndGlyphs" transform="rotate(0.03 496.4 342.4)">Version SW: D#1970-01-01</text>
<text x="496.4" y="348.3" font-size="8.0" fill="#222" textLength="93.6" lengthAdjust="spacingAndGlyphs" transform="rotate(0.03 496.4 348.3)">Version Reg: D#1970-01-01</text>
<text x="496.4" y="354.2" font-size="8.0" fill="#222" textLength="34.0" lengthAdjust="spacingAndGlyphs" transform="rotate(0.03 496.4 354.2)">Unique ID:</text>
<text x="496.4" y="360.1" font-size="8.0" fill="#222" textLength="69.5" lengthAdjust="spacingAndGlyphs" transform="rotate(0.03 496.4 360.1)">Voltage level A: 23.3</text>
<text x="496.4" y="366.0" font-size="8.0" fill="#222" textLength="69.5" lengthAdjust="spacingAndGlyphs" transform="rotate(0.03 496.4 366.0)">Voltage level B: 20.6</text>
<text x="496.4" y="371.9" font-size="8.0" fill="#222" textLength="35.0" lengthAdjust="spacingAndGlyphs" transform="rotate(0.03 496.4 371.9)">Array id: 7</text>
<rect x="493.90" y="373.60" width="164.80" height="8.60" fill="#12ea12"/>
<text x="541.0" y="380.9" font-size="7.9" fill="#0f6a0f" textLength="70.1" lengthAdjust="spacingAndGlyphs">423_VAVC_7 ACTIVE</text>
<rect x="494.30" y="383.50" width="164.00" height="44.60" fill="#fff" stroke="#9a9a9a" stroke-width="1"/>
<text x="496.4" y="391.0" font-size="8.0" fill="#222" textLength="92.4" lengthAdjust="spacingAndGlyphs" transform="rotate(0.03 496.4 391.0)">Version HW: D#2016-01-08</text>
<text x="496.4" y="396.9" font-size="8.0" fill="#222" textLength="92.4" lengthAdjust="spacingAndGlyphs" transform="rotate(0.03 496.4 396.9)">Version SW: D#2016-05-04</text>
<text x="496.4" y="402.8" font-size="8.0" fill="#222" textLength="93.6" lengthAdjust="spacingAndGlyphs" transform="rotate(0.03 496.4 402.8)">Version Reg: D#1970-01-01</text>
<text x="496.4" y="408.7" font-size="8.0" fill="#222" textLength="136.4" lengthAdjust="spacingAndGlyphs" transform="rotate(0.03 496.4 408.7)">Unique ID: 12803A000557325535363420</text>
<text x="496.4" y="414.6" font-size="8.0" fill="#222" textLength="69.5" lengthAdjust="spacingAndGlyphs" transform="rotate(0.03 496.4 414.6)">Voltage level A: 23.4</text>
<text x="496.4" y="420.5" font-size="8.0" fill="#222" textLength="69.5" lengthAdjust="spacingAndGlyphs" transform="rotate(0.03 496.4 420.5)">Voltage level B: 21.0</text>
<text x="496.4" y="426.4" font-size="8.0" fill="#222" textLength="35.0" lengthAdjust="spacingAndGlyphs" transform="rotate(0.03 496.4 426.4)">Array id: 8</text>
<rect x="493.90" y="428.10" width="164.80" height="8.60" fill="#12ea12"/>
<text x="540.0" y="435.4" font-size="7.9" fill="#0f6a0f" textLength="72.6" lengthAdjust="spacingAndGlyphs">423_TP10_13 ACTIVE</text>
<rect x="1.90" y="441.00" width="796.70" height="27.50" fill="#8b8172" rx="1.2"/>
<rect x="4.40" y="444.40" width="28.70" height="20.00" fill="#e4e4e4"/>
<g fill="none">
<circle cx="13.60" cy="450.30" r="0.9" fill="#555" stroke="#888" stroke-width="0.5"/>
<path d="M12.5 452.6 h1.5 v6.6" stroke="#555" stroke-width="1.2"/>
<path d="M11.9 459.5 h3.6" stroke="#666" stroke-width="1"/>
<ellipse cx="13.6" cy="459.8" rx="3.2" ry="1.0" stroke="#c4c4c4" stroke-width="0.6"/>
</g>
<text x="21.5" y="459.0" font-size="11.3" fill="#111" textLength="5.5" lengthAdjust="spacingAndGlyphs">0</text>
<rect x="35.00" y="444.40" width="29.00" height="20.00" fill="#e4e4e4"/>
<g>
<circle cx="47.40" cy="451.20" r="2.5" fill="#6a6565" stroke="#444040" stroke-width="0.6"/>
<path d="M42.4 464 C43 458 45.2 454.6 47.6 454.6 C50.6 454.6 53.4 458 54.4 464 Z" fill="#565252" stroke="#2e2b2b" stroke-width="0.6"/>
<path d="M47.6 455.4 L46.5 463.6 M47.6 455.4 L49.6 463.6" stroke="#8a8585" stroke-width="0.6" fill="none"/>
<path d="M49.4 448.6 q2.4 -2.2 4.8 0 q0.4 2.8 -2.2 4.2" stroke="#9a9a9a" stroke-width="0.6" fill="none"/>
<path d="M53.6 449 l1.6 -0.6 M54.6 451 l1.6 0.2 M53.6 455.2 q3.8 2.6 4.0 8.2" stroke="#8a8a8a" stroke-width="0.6" fill="none"/>
</g>
<rect x="66.00" y="444.40" width="29.00" height="20.00" fill="#efefef"/>
<rect x="69.00" y="446.20" width="20.60" height="15.40" fill="#3e3e3e"/>
<rect x="69.60" y="446.70" width="19.40" height="2.40" fill="#808080"/>
<rect x="70.05" y="450.15" width="2.33" height="2.10" fill="#fff"/>
<rect x="73.28" y="450.15" width="2.33" height="2.10" fill="#fff"/>
<rect x="76.52" y="450.15" width="2.33" height="2.10" fill="#fff"/>
<rect x="79.75" y="450.15" width="2.33" height="2.10" fill="#fff"/>
<rect x="82.98" y="450.15" width="2.33" height="2.10" fill="#fff"/>
<rect x="86.22" y="450.15" width="2.33" height="2.10" fill="#fff"/>
<rect x="70.05" y="452.95" width="2.33" height="2.10" fill="#fff"/>
<rect x="73.28" y="452.95" width="2.33" height="2.10" fill="#fff"/>
<rect x="76.52" y="452.95" width="2.33" height="2.10" fill="#fff"/>
<rect x="79.75" y="452.95" width="2.33" height="2.10" fill="#fff"/>
<rect x="82.98" y="452.95" width="2.33" height="2.10" fill="#fff"/>
<rect x="86.22" y="452.95" width="2.33" height="2.10" fill="#fff"/>
<rect x="70.05" y="455.75" width="2.33" height="2.10" fill="#fff"/>
<rect x="73.28" y="455.75" width="2.33" height="2.10" fill="#fff"/>
<rect x="76.52" y="455.75" width="2.33" height="2.10" fill="#fff"/>
<rect x="79.75" y="455.75" width="2.33" height="2.10" fill="#fff"/>
<rect x="82.98" y="455.75" width="2.33" height="2.10" fill="#fff"/>
<rect x="86.22" y="455.75" width="2.33" height="2.10" fill="#fff"/>
<rect x="70.05" y="458.55" width="2.33" height="2.10" fill="#fff"/>
<rect x="73.28" y="458.55" width="2.33" height="2.10" fill="#fff"/>
<rect x="76.52" y="458.55" width="2.33" height="2.10" fill="#fff"/>
<rect x="79.75" y="458.55" width="2.33" height="2.10" fill="#fff"/>
<rect x="82.98" y="458.55" width="2.33" height="2.10" fill="#fff"/>
<rect x="86.22" y="458.55" width="2.33" height="2.10" fill="#fff"/>
<path d="M69.6 457.8 l4.5 -1.2 l2.4 0.8 l3 -0.6 l2.6 -2.6 l2.6 -1.6 l1.6 1.8" stroke="#fff" stroke-width="1.3" fill="none"/>
<rect x="96.30" y="444.40" width="28.90" height="20.00" fill="#efefef"/>
<rect x="99.10" y="446.90" width="20.60" height="14.70" fill="#3e3e3e"/>
<rect x="99.70" y="447.40" width="19.40" height="2.40" fill="#808080"/>
<rect x="100.15" y="450.85" width="2.33" height="1.93" fill="#fff"/>
<rect x="103.38" y="450.85" width="2.33" height="1.93" fill="#fff"/>
<rect x="106.62" y="450.85" width="2.33" height="1.93" fill="#fff"/>
<rect x="109.85" y="450.85" width="2.33" height="1.93" fill="#fff"/>
<rect x="113.08" y="450.85" width="2.33" height="1.93" fill="#fff"/>
<rect x="116.32" y="450.85" width="2.33" height="1.93" fill="#fff"/>
<rect x="100.15" y="453.48" width="2.33" height="1.93" fill="#fff"/>
<rect x="103.38" y="453.48" width="2.33" height="1.93" fill="#fff"/>
<rect x="106.62" y="453.48" width="2.33" height="1.93" fill="#fff"/>
<rect x="109.85" y="453.48" width="2.33" height="1.93" fill="#fff"/>
<rect x="113.08" y="453.48" width="2.33" height="1.93" fill="#fff"/>
<rect x="116.32" y="453.48" width="2.33" height="1.93" fill="#fff"/>
<rect x="100.15" y="456.10" width="2.33" height="1.93" fill="#fff"/>
<rect x="103.38" y="456.10" width="2.33" height="1.93" fill="#fff"/>
<rect x="106.62" y="456.10" width="2.33" height="1.93" fill="#fff"/>
<rect x="109.85" y="456.10" width="2.33" height="1.93" fill="#fff"/>
<rect x="113.08" y="456.10" width="2.33" height="1.93" fill="#fff"/>
<rect x="116.32" y="456.10" width="2.33" height="1.93" fill="#fff"/>
<rect x="100.15" y="458.72" width="2.33" height="1.93" fill="#fff"/>
<rect x="103.38" y="458.72" width="2.33" height="1.93" fill="#fff"/>
<rect x="106.62" y="458.72" width="2.33" height="1.93" fill="#fff"/>
<rect x="109.85" y="458.72" width="2.33" height="1.93" fill="#fff"/>
<rect x="113.08" y="458.72" width="2.33" height="1.93" fill="#fff"/>
<rect x="116.32" y="458.72" width="2.33" height="1.93" fill="#fff"/>
<path d="M99.9 457.3 l3.2 -3.4 l1.6 0.6 l-1.2 3.6" stroke="#fff" stroke-width="1.5" fill="none"/>
<line x1="107.30" y1="452.10" x2="107.30" y2="458.50" stroke="#fff" stroke-width="1.2"/>
<line x1="110.70" y1="452.10" x2="110.70" y2="458.50" stroke="#fff" stroke-width="1.2"/>
<line x1="114.10" y1="452.10" x2="114.10" y2="458.50" stroke="#fff" stroke-width="1.2"/>
<line x1="117.30" y1="452.10" x2="117.30" y2="458.50" stroke="#fff" stroke-width="1.2"/>
<rect x="128.10" y="444.40" width="28.90" height="20.00" fill="#e4e4e4"/>
<g stroke="#2c2c2c" stroke-width="1" fill="none" stroke-linejoin="miter">
<path d="M131.2 447.5 h22 v7.7 h-4.6 v-2.6 h-17.4 Z" fill="#f3f6f9"/>
<path d="M131.2 454.1 h14.2 v1.6 h-0.7 v6.7 h8.5" fill="none"/>
<path d="M131.2 454.1 v5.6 h13.5 v-5.6 Z" fill="#fbfcfd"/>
<line x1="135.90" y1="447.50" x2="135.90" y2="452.60" stroke="#2c2c2c" stroke-width="1"/>
<line x1="140.60" y1="447.50" x2="140.60" y2="452.60" stroke="#2c2c2c" stroke-width="1"/>
<line x1="145.30" y1="447.50" x2="145.30" y2="452.60" stroke="#2c2c2c" stroke-width="1"/>
<line x1="135.90" y1="454.10" x2="135.90" y2="459.70" stroke="#2c2c2c" stroke-width="1"/>
<line x1="140.60" y1="454.10" x2="140.60" y2="459.70" stroke="#2c2c2c" stroke-width="1"/>
</g>
<text x="152.7" y="465.6" font-size="10.5" fill="#25a425" font-weight="bold" stroke="#0e640e" stroke-width="0.6" paint-order="stroke">0</text>
<rect x="158.90" y="444.40" width="28.90" height="20.00" fill="#e4e4e4"/>
<g stroke="#2c2c2c" stroke-width="1" fill="none" stroke-linejoin="miter">
<path d="M162.0 447.5 h22 v7.7 h-4.6 v-2.6 h-17.4 Z" fill="#f3f6f9"/>
<path d="M162.0 454.1 h14.2 v1.6 h-0.7 v6.7 h8.5" fill="none"/>
<path d="M162.0 454.1 v5.6 h13.5 v-5.6 Z" fill="#fbfcfd"/>
<line x1="166.70" y1="447.50" x2="166.70" y2="452.60" stroke="#2c2c2c" stroke-width="1"/>
<line x1="171.40" y1="447.50" x2="171.40" y2="452.60" stroke="#2c2c2c" stroke-width="1"/>
<line x1="176.10" y1="447.50" x2="176.10" y2="452.60" stroke="#2c2c2c" stroke-width="1"/>
<line x1="166.70" y1="454.10" x2="166.70" y2="459.70" stroke="#2c2c2c" stroke-width="1"/>
<line x1="171.40" y1="454.10" x2="171.40" y2="459.70" stroke="#2c2c2c" stroke-width="1"/>
</g>
<text x="183.5" y="465.6" font-size="10.5" fill="#25a425" font-weight="bold" stroke="#0e640e" stroke-width="0.6" paint-order="stroke">1</text>
<rect x="189.70" y="444.40" width="28.90" height="20.00" fill="#e4e4e4"/>
<g stroke="#2c2c2c" stroke-width="1" fill="none" stroke-linejoin="miter">
<path d="M192.8 447.5 h22 v7.7 h-4.6 v-2.6 h-17.4 Z" fill="#f3f6f9"/>
<path d="M192.8 454.1 h14.2 v1.6 h-0.7 v6.7 h8.5" fill="none"/>
<path d="M192.8 454.1 v5.6 h13.5 v-5.6 Z" fill="#fbfcfd"/>
<line x1="197.50" y1="447.50" x2="197.50" y2="452.60" stroke="#2c2c2c" stroke-width="1"/>
<line x1="202.20" y1="447.50" x2="202.20" y2="452.60" stroke="#2c2c2c" stroke-width="1"/>
<line x1="206.90" y1="447.50" x2="206.90" y2="452.60" stroke="#2c2c2c" stroke-width="1"/>
<line x1="197.50" y1="454.10" x2="197.50" y2="459.70" stroke="#2c2c2c" stroke-width="1"/>
<line x1="202.20" y1="454.10" x2="202.20" y2="459.70" stroke="#2c2c2c" stroke-width="1"/>
</g>
<text x="214.3" y="465.6" font-size="10.5" fill="#25a425" font-weight="bold" stroke="#0e640e" stroke-width="0.6" paint-order="stroke">2</text>
<rect x="220.40" y="444.40" width="28.90" height="20.00" fill="#e4e4e4"/>
<g stroke="#2c2c2c" stroke-width="1" fill="none" stroke-linejoin="miter">
<path d="M223.5 447.5 h22 v7.7 h-4.6 v-2.6 h-17.4 Z" fill="#f3f6f9"/>
<path d="M223.5 454.1 h14.2 v1.6 h-0.7 v6.7 h8.5" fill="none"/>
<path d="M223.5 454.1 v5.6 h13.5 v-5.6 Z" fill="#fbfcfd"/>
<line x1="228.20" y1="447.50" x2="228.20" y2="452.60" stroke="#2c2c2c" stroke-width="1"/>
<line x1="232.90" y1="447.50" x2="232.90" y2="452.60" stroke="#2c2c2c" stroke-width="1"/>
<line x1="237.60" y1="447.50" x2="237.60" y2="452.60" stroke="#2c2c2c" stroke-width="1"/>
<line x1="228.20" y1="454.10" x2="228.20" y2="459.70" stroke="#2c2c2c" stroke-width="1"/>
<line x1="232.90" y1="454.10" x2="232.90" y2="459.70" stroke="#2c2c2c" stroke-width="1"/>
</g>
<text x="245.0" y="465.6" font-size="10.5" fill="#25a425" font-weight="bold" stroke="#0e640e" stroke-width="0.6" paint-order="stroke">3</text>
<rect x="251.20" y="444.40" width="28.90" height="20.00" fill="#e4e4e4"/>
<g stroke="#2c2c2c" stroke-width="1" fill="none" stroke-linejoin="miter">
<path d="M254.3 447.5 h22 v7.7 h-4.6 v-2.6 h-17.4 Z" fill="#f3f6f9"/>
<path d="M254.3 454.1 h14.2 v1.6 h-0.7 v6.7 h8.5" fill="none"/>
<path d="M254.3 454.1 v5.6 h13.5 v-5.6 Z" fill="#fbfcfd"/>
<line x1="259.00" y1="447.50" x2="259.00" y2="452.60" stroke="#2c2c2c" stroke-width="1"/>
<line x1="263.70" y1="447.50" x2="263.70" y2="452.60" stroke="#2c2c2c" stroke-width="1"/>
<line x1="268.40" y1="447.50" x2="268.40" y2="452.60" stroke="#2c2c2c" stroke-width="1"/>
<line x1="259.00" y1="454.10" x2="259.00" y2="459.70" stroke="#2c2c2c" stroke-width="1"/>
<line x1="263.70" y1="454.10" x2="263.70" y2="459.70" stroke="#2c2c2c" stroke-width="1"/>
</g>
<text x="275.8" y="465.6" font-size="10.5" fill="#25a425" font-weight="bold" stroke="#0e640e" stroke-width="0.6" paint-order="stroke">4</text>
<rect x="281.40" y="444.40" width="28.90" height="20.00" fill="#e4e4e4"/>
<g stroke="#2c2c2c" stroke-width="1" fill="none" stroke-linejoin="miter">
<path d="M284.5 447.5 h22 v7.7 h-4.6 v-2.6 h-17.4 Z" fill="#f3f6f9"/>
<path d="M284.5 454.1 h14.2 v1.6 h-0.7 v6.7 h8.5" fill="none"/>
<path d="M284.5 454.1 v5.6 h13.5 v-5.6 Z" fill="#fbfcfd"/>
<line x1="289.20" y1="447.50" x2="289.20" y2="452.60" stroke="#2c2c2c" stroke-width="1"/>
<line x1="293.90" y1="447.50" x2="293.90" y2="452.60" stroke="#2c2c2c" stroke-width="1"/>
<line x1="298.60" y1="447.50" x2="298.60" y2="452.60" stroke="#2c2c2c" stroke-width="1"/>
<line x1="289.20" y1="454.10" x2="289.20" y2="459.70" stroke="#2c2c2c" stroke-width="1"/>
<line x1="293.90" y1="454.10" x2="293.90" y2="459.70" stroke="#2c2c2c" stroke-width="1"/>
</g>
<text x="306.0" y="465.6" font-size="10.5" fill="#25a425" font-weight="bold" stroke="#0e640e" stroke-width="0.6" paint-order="stroke">5</text>
<rect x="316.90" y="444.40" width="29.40" height="20.00" fill="#e4e4e4"/>
<g fill="none">
<line x1="326.30" y1="446.80" x2="326.30" y2="461.20" stroke="#333" stroke-width="0.9"/>
<ellipse cx="326.3" cy="450.0" rx="1.1" ry="1.5" fill="#ddd" stroke="#333" stroke-width="0.8"/>
<line x1="334.40" y1="446.80" x2="334.40" y2="461.20" stroke="#333" stroke-width="0.9"/>
<ellipse cx="334.4" cy="450.0" rx="1.1" ry="1.5" fill="#ddd" stroke="#333" stroke-width="0.8"/>
<line x1="330.60" y1="446.80" x2="330.60" y2="461.20" stroke="#8c8c8c" stroke-width="1.1"/>
<line x1="338.70" y1="446.80" x2="338.70" y2="456.60" stroke="#9a9a9a" stroke-width="1.2"/>
<line x1="326.30" y1="457.60" x2="330.40" y2="457.60" stroke="#333" stroke-width="0.9"/>
<line x1="323.10" y1="461.40" x2="335.70" y2="461.40" stroke="#333" stroke-width="0.9"/>
<line x1="323.10" y1="463.30" x2="335.70" y2="463.30" stroke="#666" stroke-width="0.8"/>
</g>
<text x="335.9" y="466.7" font-size="10.8" fill="#25a425" font-weight="bold" stroke="#0e640e" stroke-width="0.6" paint-order="stroke">H</text>
<rect x="348.10" y="444.40" width="29.20" height="20.00" fill="#e4e4e4"/>
<g fill="none">
<line x1="357.50" y1="446.80" x2="357.50" y2="461.20" stroke="#333" stroke-width="0.9"/>
<ellipse cx="357.5" cy="450.0" rx="1.1" ry="1.5" fill="#ddd" stroke="#333" stroke-width="0.8"/>
<line x1="365.60" y1="446.80" x2="365.60" y2="461.20" stroke="#333" stroke-width="0.9"/>
<ellipse cx="365.6" cy="450.0" rx="1.1" ry="1.5" fill="#ddd" stroke="#333" stroke-width="0.8"/>
<line x1="361.80" y1="446.80" x2="361.80" y2="461.20" stroke="#8c8c8c" stroke-width="1.1"/>
<line x1="369.90" y1="446.80" x2="369.90" y2="456.60" stroke="#9a9a9a" stroke-width="1.2"/>
<line x1="357.50" y1="457.60" x2="361.60" y2="457.60" stroke="#333" stroke-width="0.9"/>
<line x1="354.30" y1="461.40" x2="366.90" y2="461.40" stroke="#333" stroke-width="0.9"/>
<line x1="354.30" y1="463.30" x2="366.90" y2="463.30" stroke="#666" stroke-width="0.8"/>
</g>
<text x="368.4" y="466.9" font-size="10.8" fill="#25a425" font-weight="bold" stroke="#0e640e" stroke-width="0.6" paint-order="stroke">C</text>
<rect x="379.00" y="444.40" width="29.10" height="20.00" fill="#e4e4e4"/>
<ellipse cx="393.1" cy="449.5" rx="5.3" ry="2.5" fill="#2c3434"/>
<path d="M389.8 449.6 q3 -1.8 6.6 0" stroke="#b8d0c8" stroke-width="0.7" fill="none"/>
<text x="383.0" y="461.0" font-size="8.1" fill="#a0a0a0" textLength="18.0" lengthAdjust="spacingAndGlyphs">HVAC</text>
<rect x="409.80" y="444.40" width="28.30" height="20.00" fill="#e4e4e4"/>
<g stroke="#888" stroke-width="0.7" fill="none">
<rect x="420.60" y="447.60" width="7.60" height="3.60" fill="#e6e6e6" stroke="#888" stroke-width="0.7"/>
<line x1="417.80" y1="449.40" x2="420.60" y2="449.40" stroke="#888" stroke-width="0.7"/>
<line x1="428.20" y1="449.40" x2="431.40" y2="449.40" stroke="#888" stroke-width="0.7"/>
<line x1="422.40" y1="448.60" x2="426.60" y2="448.60" stroke="#aaa" stroke-width="0.6"/>
<line x1="422.40" y1="450.20" x2="426.60" y2="450.20" stroke="#aaa" stroke-width="0.6"/>
</g>
<text x="413.8" y="461.0" font-size="8.1" fill="#a0a0a0" textLength="18.0" lengthAdjust="spacingAndGlyphs">HVAC</text>
<rect x="441.30" y="444.40" width="29.00" height="20.00" fill="#e4e4e4"/>
<rect x="446.30" y="447.30" width="17.60" height="14.20" fill="#bcbcbc" stroke="#9a9a9a" stroke-width="0.7"/>
<rect x="457.90" y="454.50" width="9.20" height="7.00" fill="#c6c6c6" stroke="#8e8e8e" stroke-width="0.8"/>
<line x1="446.30" y1="453.90" x2="463.90" y2="453.90" stroke="#858585" stroke-width="0.8"/>
<line x1="452.30" y1="447.30" x2="452.30" y2="461.50" stroke="#858585" stroke-width="0.8"/>
<line x1="453.90" y1="447.30" x2="453.90" y2="461.50" stroke="#aaa" stroke-width="0.6"/>
<ellipse cx="459.7" cy="450.5" rx="2.2" ry="1.4" fill="none" stroke="#9a9a9a" stroke-width="0.6"/>
<ellipse cx="461.9" cy="457.7" rx="2.2" ry="1.3" fill="none" stroke="#9a9a9a" stroke-width="0.6"/>
<text x="465.0" y="466.3" font-size="11.2" fill="#146414" textLength="5.4" lengthAdjust="spacingAndGlyphs" stroke="#146414" stroke-width="0.35">1</text>
<rect x="471.90" y="444.40" width="29.00" height="20.00" fill="#e4e4e4"/>
<rect x="476.90" y="447.30" width="17.60" height="14.20" fill="#bcbcbc" stroke="#9a9a9a" stroke-width="0.7"/>
<rect x="488.50" y="454.50" width="9.20" height="7.00" fill="#c6c6c6" stroke="#8e8e8e" stroke-width="0.8"/>
<line x1="476.90" y1="453.90" x2="494.50" y2="453.90" stroke="#858585" stroke-width="0.8"/>
<line x1="482.90" y1="447.30" x2="482.90" y2="461.50" stroke="#858585" stroke-width="0.8"/>
<line x1="484.50" y1="447.30" x2="484.50" y2="461.50" stroke="#aaa" stroke-width="0.6"/>
<ellipse cx="490.3" cy="450.5" rx="2.2" ry="1.4" fill="none" stroke="#9a9a9a" stroke-width="0.6"/>
<ellipse cx="492.5" cy="457.7" rx="2.2" ry="1.3" fill="none" stroke="#9a9a9a" stroke-width="0.6"/>
<text x="495.6" y="466.3" font-size="11.2" fill="#146414" textLength="5.4" lengthAdjust="spacingAndGlyphs" stroke="#146414" stroke-width="0.35">2</text>
<rect x="502.70" y="444.40" width="29.00" height="20.00" fill="#e4e4e4"/>
<rect x="507.70" y="447.30" width="17.60" height="14.20" fill="#bcbcbc" stroke="#9a9a9a" stroke-width="0.7"/>
<rect x="519.30" y="454.50" width="9.20" height="7.00" fill="#c6c6c6" stroke="#8e8e8e" stroke-width="0.8"/>
<line x1="507.70" y1="453.90" x2="525.30" y2="453.90" stroke="#858585" stroke-width="0.8"/>
<line x1="513.70" y1="447.30" x2="513.70" y2="461.50" stroke="#858585" stroke-width="0.8"/>
<line x1="515.30" y1="447.30" x2="515.30" y2="461.50" stroke="#aaa" stroke-width="0.6"/>
<ellipse cx="521.1" cy="450.5" rx="2.2" ry="1.4" fill="none" stroke="#9a9a9a" stroke-width="0.6"/>
<ellipse cx="523.3" cy="457.7" rx="2.2" ry="1.3" fill="none" stroke="#9a9a9a" stroke-width="0.6"/>
<text x="526.4" y="466.3" font-size="11.2" fill="#146414" textLength="5.4" lengthAdjust="spacingAndGlyphs" stroke="#146414" stroke-width="0.35">3</text>
<rect x="533.50" y="444.40" width="29.00" height="20.00" fill="#e4e4e4"/>
<rect x="538.50" y="447.30" width="17.60" height="14.20" fill="#bcbcbc" stroke="#9a9a9a" stroke-width="0.7"/>
<rect x="550.10" y="454.50" width="9.20" height="7.00" fill="#c6c6c6" stroke="#8e8e8e" stroke-width="0.8"/>
<line x1="538.50" y1="453.90" x2="556.10" y2="453.90" stroke="#858585" stroke-width="0.8"/>
<line x1="544.50" y1="447.30" x2="544.50" y2="461.50" stroke="#858585" stroke-width="0.8"/>
<line x1="546.10" y1="447.30" x2="546.10" y2="461.50" stroke="#aaa" stroke-width="0.6"/>
<ellipse cx="551.9" cy="450.5" rx="2.2" ry="1.4" fill="none" stroke="#9a9a9a" stroke-width="0.6"/>
<ellipse cx="554.1" cy="457.7" rx="2.2" ry="1.3" fill="none" stroke="#9a9a9a" stroke-width="0.6"/>
<text x="557.2" y="466.3" font-size="11.2" fill="#146414" textLength="5.4" lengthAdjust="spacingAndGlyphs" stroke="#146414" stroke-width="0.35">4</text>
<rect x="564.00" y="444.40" width="29.10" height="20.00" fill="#e4e4e4"/>
<path d="M570.2 453.4 L573.2 450.2 L584.8 450.2 L587.9 453.4 L584.8 461.3 L573.2 461.3 Z" fill="#cfcfcf" stroke="#444" stroke-width="1.1" stroke-linejoin="round"/>
<path d="M573.6 449.2 L584.2 449.2" stroke="#555" stroke-width="0.7" stroke-dasharray="1 1"/>
<rect x="596.50" y="443.90" width="21.00" height="20.00" fill="#c6c6c6"/>
<text x="598.8" y="454.0" font-size="7.2" fill="#111" textLength="16.8" lengthAdjust="spacingAndGlyphs">Buiten</text>
<text x="596.7" y="461.2" font-size="7.6" fill="#111" textLength="21.2" lengthAdjust="spacingAndGlyphs">20.0 °C</text>
<rect x="618.80" y="444.30" width="85.00" height="8.90" fill="#c2c2c2"/>
<text x="641.9" y="451.6" font-size="6.6" fill="#222" textLength="39.6" lengthAdjust="spacingAndGlyphs">UA Gebouw_Z</text>
<rect x="618.80" y="454.80" width="85.00" height="9.10" fill="#c9c9c9"/>
<text x="621.0" y="462.9" font-size="8.2" fill="#111" textLength="81.5" lengthAdjust="spacingAndGlyphs">2016-05-31_15h50m59s</text>
<rect x="708.10" y="444.40" width="29.20" height="20.00" fill="#e4e4e4"/>
<g>
<line x1="713.60" y1="460.90" x2="724.00" y2="452.60" stroke="#bcbcbc" stroke-width="3.8"/>
<circle cx="727.00" cy="451.20" r="4.8" fill="#bcbcbc"/>
<path d="M727.4 450.6 L734.5 445.2 L736 451.4 L731.5 453.4 Z" fill="#e4e4e4"/>
<circle cx="713.80" cy="460.70" r="2.0" fill="#bcbcbc"/>
</g>
<rect x="739.00" y="444.40" width="29.10" height="20.00" fill="#e0e0e4"/>
<text x="753.4" y="463.5" font-size="25" fill="#1010e0" textLength="11.0" lengthAdjust="spacingAndGlyphs" font-weight="bold" text-anchor="middle" font-style="italic" style='font-family:"Liberation Serif", serif'>i</text>
<rect x="769.40" y="444.40" width="28.70" height="20.00" fill="#fbfbfb"/>
<rect x="772.50" y="447.20" width="21.30" height="1.70" fill="#333"/>
<rect x="772.50" y="449.50" width="21.30" height="1.30" fill="#e02020"/>
<rect x="772.50" y="451.00" width="21.30" height="0.70" fill="#402020"/>
<rect x="772.50" y="451.90" width="21.30" height="1.30" fill="#e83030"/>
<rect x="772.50" y="453.20" width="21.30" height="5.20" fill="#f6ee3a"/>
<rect x="772.50" y="458.80" width="21.30" height="2.00" fill="#e060d0"/>
</svg>
</body>
</html>
